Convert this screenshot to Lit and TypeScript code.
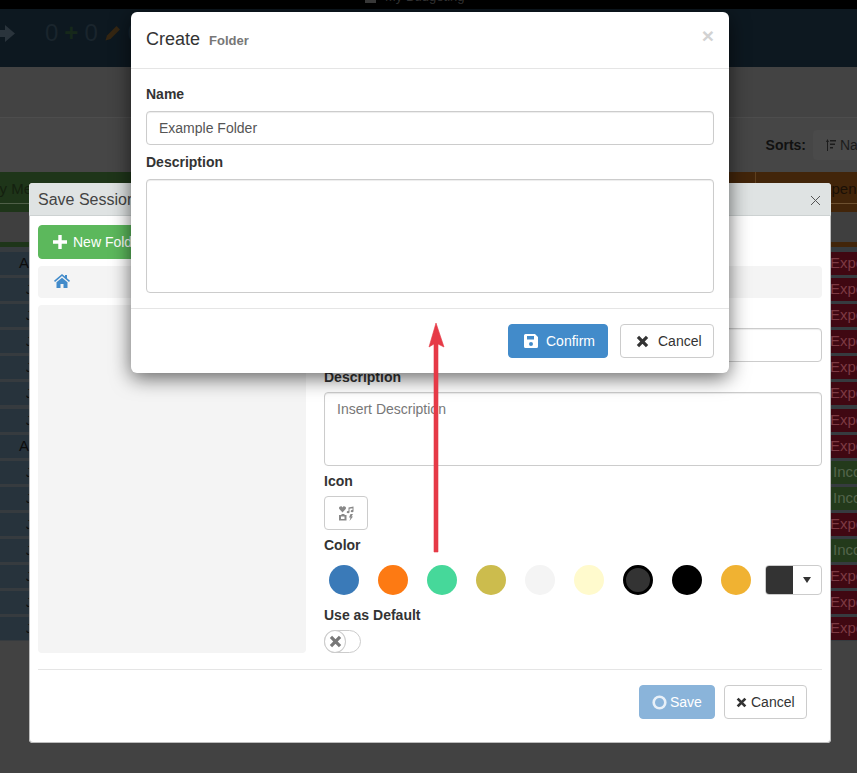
import { LitElement, html, css, svg } from "lit";
import { customElement } from "lit/decorators.js";

const xIcon = (size: number) => html`<svg class="ico" width=${size} height=${size} viewBox="0 0 12 12"><path d="M1.800 1.800 L10.200 10.200 M10.200 1.800 L1.800 10.200" stroke="currentColor" stroke-width="3" fill="none"/></svg>`;

const rows: Array<["e" | "i", string]> = [
  ["e", "A"], ["e", "J"], ["e", "J"], ["e", "J"], ["e", "J"], ["e", "J"], ["e", "J"], ["e", "A"],
  ["i", "J"], ["i", "J"], ["e", "J"], ["i", "J"], ["e", "J"], ["e", "J"], ["e", "J"],
];
const colors = ["#3a7ab8", "#fd7a13", "#46d89a", "#ccbc4d", "#f4f4f4", "#fffacd", "#333333", "#000000", "#f0b232"];

@customElement("app-root")
export class AppRoot extends LitElement {
  static styles = css`
    :host { display: block; position: relative; width: 857px; height: 773px; overflow: hidden; background: #424242; font-family: "Liberation Sans", Arial, sans-serif; font-size: 14px; color: #333; }
    * { box-sizing: border-box; }
    .ico { display: block; flex: none; }
    .topbar { height: 9px; background: #000; overflow: hidden; display: flex; gap: 9px; padding-left: 365px; }
    .topbar i { display: block; width: 11px; height: 3px; background: #3a3a3a; }
    .topbar span { color: #333; font-size: 13px; line-height: 13px; margin-top: -10px; }
    .brand { height: 58px; background: #0d1820; display: flex; align-items: center; color: #1a252d; font-size: 24px; padding: 0 0 10px 45px; }
    .brand .arrow { margin-left: -50px; margin-right: 30px; flex: none; }
    .brand .plus { color: #16281a; margin: 0 6px; font-weight: bold; line-height: 1; }
    .brand .pencil { margin: 0 7px; color: #352612; flex: none; }
    .band { height: 51px; background: #434343; border-bottom: 1px solid #4d4d4d; }
    .tools { height: 54px; background: #464646; display: flex; justify-content: flex-end; align-items: center; gap: 7px; }
    .tools b { color: #111; font-size: 14px; }
    .sortbtn { width: 44px; height: 30px; background: #4a4a4a; border-radius: 4px 0 0 4px; display: flex; align-items: center; gap: 4px; padding-left: 13px; color: #1c1c1c; overflow: hidden; white-space: nowrap; }
    .sortbtn svg { flex: none; }
    .thead { height: 40px; display: flex; justify-content: space-between; background: #3f3f3f; }
    .thead div { font-size: 15px; padding-top: 8px; white-space: nowrap; color: #14200f; position: relative; overflow: hidden; }
    .thead .g { width: 131px; text-indent: -13px; background: linear-gradient(#1e3519 31px, #4f5f48 31px, #4f5f48 32px, #1e3519 32px); }
    .thead .o { width: 128px; padding-left: 85px; color: #1a1006; background: linear-gradient(#42250a 31px, #6d5030 31px, #6d5030 32px, #42250a 32px); }
    .thead .o::before { content: ""; position: absolute; left: 26px; top: 0; bottom: 0; width: 1px; background: #5e3f1e; }
    .gap { height: 35px; background: #3f3f3f; display: flex; justify-content: space-between; align-items: flex-end; }
    .gap i { display: block; height: 5px; width: 131px; background: #1e3519; }
    .gap i + i { width: 128px; background: #42250a; }
    .table { display: flex; flex-direction: column; padding-top: 2px; background: #363b3f; height: 394px; }
    .row { height: 26.1px; flex: none; display: flex; justify-content: space-between; background: #363b3f; padding-top: 3px; }
    .left { width: 60px; background: #27333c; color: #0c0c0c; text-align: right; padding-right: 31px; font-size: 15px; line-height: 22px; height: 23px; }
    .left.j { font-size: 12px; padding-right: 28px; padding-top: 1px; }
    .right { width: 32px; height: 23px; font-size: 15px; line-height: 22px; overflow: hidden; white-space: nowrap; }
    .right.e { background: #400812; color: #7d3a43; padding-left: 5px; }
    .right.i { background: #233a1b; color: #54654b; padding-left: 8px; }

    .modal { position: absolute; background: #fff; border-radius: 6px; box-shadow: 0 5px 20px rgba(0,0,0,.6); }
    .session { left: 29px; top: 183px; width: 802px; height: 560px; border-radius: 4px; box-shadow: inset 0 0 0 1px #bdbdbd; }
    .sess-head { height: 33px; background: #dfe3e3; border-bottom: 1px solid #cdd2d2; border-radius: 4px 4px 0 0; display: flex; justify-content: space-between; align-items: center; padding: 2px 10px 0 9px; font-size: 16px; color: #444; }
    .sess-body { padding: 9px 9px 0; }
    .btn { display: flex; align-items: center; height: 34px; border-radius: 4px; border: 1px solid #ccc; background: #fff; color: #333; font-size: 14px; }
    .new { width: 150px; background: #5cb85c; border-color: #5cb85c; color: #fff; padding-left: 14px; gap: 6px; white-space: nowrap; }
    .crumb { height: 32px; margin-top: 7px; background: #f4f4f4; border-radius: 4px; display: flex; align-items: center; padding: 0 0 2px 16px; color: #428bca; }
    .cols { display: grid; grid-template-columns: 268px 498px; gap: 18px; margin-top: 5px; }
    .tree { background: #f4f4f4; border-radius: 4px; margin-top: 2px; }
    label { display: block; font-weight: bold; font-size: 14px; line-height: 20px; height: 20px; margin-bottom: 5px; color: #333; }
    .group { margin-bottom: 5px; }
    input, textarea { display: block; width: 100%; border: 1px solid #ccc; border-radius: 4px; font: 14px "Liberation Sans", Arial, sans-serif; color: #555; padding: 6px 12px; background: #fff; resize: none; outline: none; box-shadow: inset 0 1px 1px rgba(0,0,0,.075); margin: 0; }
    input { height: 34px; }
    input::placeholder, textarea::placeholder { color: #777; }
    .t1 { height: 74px; padding-top: 8px; }
    .t2 { height: 114px; }
    .iconbtn { width: 44px; justify-content: center; color: #888; }
    .swatches { display: flex; align-items: center; height: 30px; margin-top: 10px; margin-bottom: 10px; padding-left: 5px; }
    .sw { width: 30px; height: 30px; border-radius: 50%; margin-right: 19px; flex: none; }
    .sw.sel { border: 3px solid #000; }
    .picker { margin-left: -5px; width: 57px; height: 30px; border: 1px solid #ccc; border-radius: 4px; display: flex; overflow: hidden; flex: none; }
    .picker i { display: block; width: 27px; background: #333; }
    .picker span { flex: 1; display: flex; align-items: center; justify-content: center; color: #333; }
    .toggle { width: 37px; height: 23px; border: 1px solid #ccc; border-radius: 12px; position: relative; }
    .knob { position: absolute; left: -1px; top: -1px; width: 22px; height: 23px; border-radius: 50%; border: 1px solid #ccc; background: #fff; display: flex; align-items: center; justify-content: center; color: #777; }
    .sep { height: 1px; background: #e5e5e5; margin-top: 16px; }
    .sess-foot { display: flex; justify-content: flex-end; gap: 9px; padding: 15px 15px 0 0; }
    .save { width: 76px; background: #8ab4da; border-color: #8ab4da; color: #fff; padding-left: 12px; gap: 3px; }
    .cancel1 { width: 83px; padding-left: 11px; gap: 4px; }

    .create { left: 131px; top: 12px; width: 598px; height: 361px; }
    .c-head { height: 57px; border-bottom: 1px solid #e5e5e5; padding: 0 15px; display: flex; align-items: center; position: relative; }
    .c-head h4 { margin: -2px 0 0; font-size: 18px; font-weight: normal; color: #333; }
    .c-head small { font-size: 13px; font-weight: bold; color: #777; margin-left: 4px; }
    .close { position: absolute; right: 15px; top: 10px; font-size: 21px; font-weight: bold; line-height: 28px; color: #d2d2d2; }
    .c-body { padding: 15px; }
    .c-body label { margin-bottom: 7px; }
    .c-body .group { margin-bottom: 7px; }
    .c-foot { border-top: 1px solid #e5e5e5; padding: 15px 15px 0; display: flex; justify-content: flex-end; gap: 12px; }
    .confirm { width: 100px; background: #428bca; border-color: #428bca; color: #fff; padding-left: 15px; gap: 8px; }
    .cancel2 { width: 94px; padding-left: 15px; gap: 9px; }
    .annot { position: absolute; left: 425px; top: 318px; pointer-events: none; }
  `;

  render() {
    return html`
      <div class="topbar"><i></i><span>My Budgeting</span></div>
      <div class="brand">
        <svg class="arrow" width="20" height="17" viewBox="0 0 20 17" fill="#2a343c"><path d="M0 5h10V0l10 8.500L10 17v-5H0z"/></svg>
        <span>0</span><span class="plus">+</span><span>0</span>
        <svg class="pencil" width="16" height="16" viewBox="0 0 16 16" fill="currentColor"><path d="M11.500 1l3.500 3.500-9.500 9.500-5 1.500 1.500-5z"/></svg>
        <span>0</span>
      </div>
      <div class="band"></div>
      <div class="tools">
        <b>Sorts:</b>
        <div class="sortbtn">
          <svg width="10" height="12" viewBox="0 0 10 12" fill="currentColor"><path d="M1.500 0l1.500 3H2v9H1V3H0zM4 1h6v1.500H4zM4 4.500h5V6H4zM4 8h3v1.500H4z"/></svg>
          <span>Name</span>
        </div>
      </div>
      <div class="thead"><div class="g">My Me</div><div class="o">Expenses</div></div>
      <div class="gap"><i></i><i></i></div>
      <div class="table">
        ${rows.map(([k, l]) => html`<div class="row">
          <div class="left ${l === "J" ? "j" : ""}">${l}</div>
          <div class="right ${k}">${k === "e" ? "Expense" : "Income"}</div>
        </div>`)}
      </div>

      <section class="modal session">
        <div class="sess-head"><span>Save Session</span>
          <svg width="11" height="11" viewBox="0 0 11 11"><path d="M1 1l9 9M10 1l-9 9" stroke="#555" stroke-width="1" fill="none"/></svg>
        </div>
        <div class="sess-body">
          <div class="btn new">
            <svg class="ico" width="14" height="14" viewBox="0 0 14 14" fill="#fff"><path d="M5.300 0h3.400v5.300H14v3.400H8.700V14H5.300V8.700H0V5.300h5.300z"/></svg>
            <span>New Folder</span>
          </div>
          <div class="crumb">
            <svg width="16" height="14" viewBox="0 0 16 14" fill="currentColor"><path d="M8 0L0 6.800l1 1.200 7-5.900 7 5.900 1-1.200-3-2.500V1h-2v1.600zM2.500 8.300V14h4V10h3v4h4V8.300L8 3.700z"/></svg>
          </div>
          <div class="cols">
            <div class="tree"></div>
            <div>
              <div class="group"><label>Name</label><input /></div>
              <div class="group"><label>Description</label><textarea class="t1" placeholder="Insert Description"></textarea></div>
              <div class="group"><label>Icon</label>
                <div class="btn iconbtn">
                  <svg width="15" height="15" viewBox="0 0 15 15" fill="currentColor">
                    <path d="M3.500 6.500L0.300 3C-1 1 2.500-1 3.500 1.500 4.500-1 8 1 6.700 3z"/>
                    <path d="M9.500 1.500L14.500 .5V5a1.400 1.200 0 1 1-1-1V2.200L10.500 2.800V6a1.400 1.200 0 1 1-1-1z"/>
                    <path d="M0 9h2l1-1h2l1 1h1.500v5.500H0zM2 10.500v2.500h3.500v-2.500z" fill-rule="evenodd"/>
                    <path d="M11.500 8h2.500l-1.500 2.500H14L10.500 15l1-3.500H10z"/>
                  </svg>
                </div>
              </div>
              <div class="group"><label>Color</label>
                <div class="swatches">
                  ${colors.map((c) => html`<div class="sw ${c === "#333333" ? "sel" : ""}" style="background:${c}"></div>`)}
                  <div class="picker"><i></i><span><svg width="8" height="6" viewBox="0 0 8 6" fill="currentColor"><path d="M0 0h8L4 6z"/></svg></span></div>
                </div>
              </div>
              <div><label>Use as Default</label>
                <div class="toggle"><div class="knob">${xIcon(13)}</div></div>
              </div>
            </div>
          </div>
          <div class="sep"></div>
          <div class="sess-foot">
            <div class="btn save">
              <svg class="ico" width="15" height="15" viewBox="0 0 15 15"><circle cx="7.500" cy="7.500" r="5.800" fill="none" stroke="#e8f0f8" stroke-width="2.600"/></svg>
              <span>Save</span>
            </div>
            <div class="btn cancel1">${xIcon(11)}<span>Cancel</span></div>
          </div>
        </div>
      </section>

      <section class="modal create">
        <div class="c-head">
          <h4>Create <small>Folder</small></h4>
          <span class="close">×</span>
        </div>
        <div class="c-body">
          <div class="group"><label>Name</label><input value="Example Folder" /></div>
          <div><label>Description</label><textarea class="t2"></textarea></div>
        </div>
        <div class="c-foot">
          <div class="btn confirm">
            <svg class="ico" width="14" height="14" viewBox="0 0 14 14" fill="#fff"><path d="M1.500 0H11l3 3v9.500a1.500 1.500 0 0 1-1.500 1.500h-11A1.500 1.500 0 0 1 0 12.500v-11A1.500 1.500 0 0 1 1.500 0zM3 2v3.500h7V2zM7 8a2 2 0 1 0 0 4 2 2 0 0 0 0-4z" fill-rule="evenodd"/></svg>
            <span>Confirm</span>
          </div>
          <div class="btn cancel2">${xIcon(13)}<span>Cancel</span></div>
        </div>
      </section>

      <svg class="annot" width="24" height="240" viewBox="0 0 24 240">
        ${svg`<path d="M11 5 L4 29 L9 26 L9 234 L13 234 L13 26 L19 29 Z" fill="#e63a47" stroke="#e63a47" stroke-width=".6"/>`}
      </svg>
    `;
  }
}
